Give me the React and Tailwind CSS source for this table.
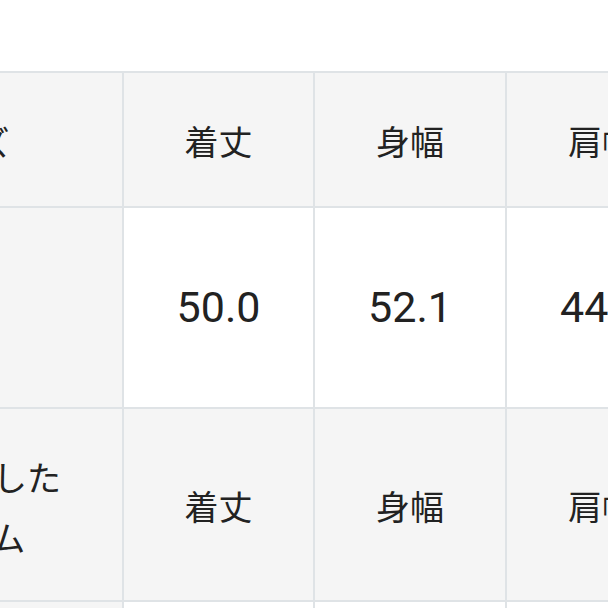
import React from "react";

// 寸法表（横スクロールされた状態の一部）
const rows = [
  { kind: "head", label: ["サイズ"], cells: ["着丈", "身幅", "肩幅"], h: "h-[133px]" },
  { kind: "value", label: [""], cells: ["50.0", "52.1", "44.0"], h: "h-[199px]" },
  { kind: "head", label: ["比較用にした", "アイテム"], cells: ["着丈", "身幅", "肩幅"], h: "h-[191px]" },
  { kind: "value", label: [""], cells: ["48.5", "50.0", "43.0"], h: "h-[199px]" },
];

const App = () => {
  return (
    <div
      className="w-[608px] h-[608px] overflow-hidden bg-white pt-[71px]"
      style={{ fontFamily: "Roboto, 'Noto Sans CJK JP', sans-serif" }}
    >
      <div className="ml-[-206px] w-max">
        <div className="grid grid-cols-[326px_189px_190px_190px] gap-[2px] bg-[#dfe3e6] p-[2px]">
          {rows.map((row, ri) => (
            <React.Fragment key={ri}>
              <div
                className={`${row.h} flex flex-col items-center justify-center pt-[8px] bg-[#f5f5f5] text-[34px] leading-[60px] text-[#222]`}
              >
                {row.label.map((l, li) => (
                  <span key={li}>{l}</span>
                ))}
              </div>
              {row.cells.map((c, ci) => (
                <div
                  key={ci}
                  className={`${row.h} flex items-center justify-center text-[#222] ${
                    row.kind === "head"
                      ? "bg-[#f5f5f5] text-[34px] pt-[8px]"
                      : "bg-white text-[43px]"
                  }`}
                >
                  {c}
                </div>
              ))}
            </React.Fragment>
          ))}
        </div>
      </div>
    </div>
  );
};

export default App;
